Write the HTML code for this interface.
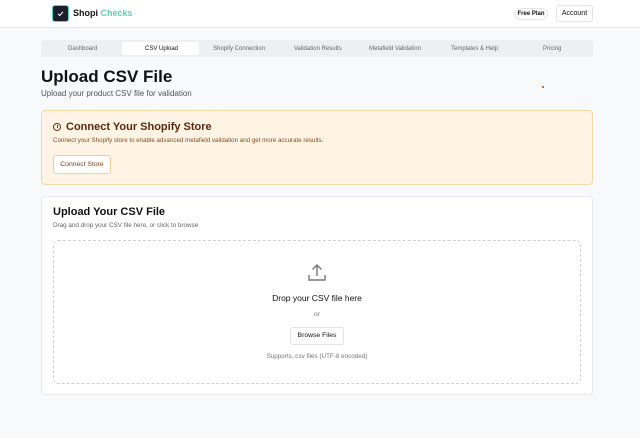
<!DOCTYPE html>
<html><head><style>
*{margin:0;padding:0;box-sizing:border-box}
body{width:640px;height:438px;background:#f8f9fa;font-family:"Liberation Sans",sans-serif;position:relative;overflow:hidden;color:#111}
.a{position:absolute}
</style></head><body>
<div class="a" style="left:0;top:0;width:640px;height:28px;background:#fff;border-bottom:1px solid #e8e8ec"></div>
<div class="a" style="left:52px;top:5px;width:17px;height:17px;background:#1d1d2b;border:1.5px solid #5ad6bf;border-radius:3px"></div>
<svg class="a" style="left:56px;top:9px" width="9" height="9" viewBox="0 0 9 9"><path d="M2 4.8L3.8 6.5L7 2.8" stroke="#fff" stroke-width="1.1" fill="none"/></svg>
<div class="a" style="left:73px;top:8px;font-size:9px;font-weight:bold">Shopi <span style="color:#5ccfb5">Checks</span></div>
<div class="a" style="left:514px;top:8px;width:34px;height:12px;border:1px solid #e6e6e6;border-radius:6px;font-size:6px;font-weight:bold;text-align:center;line-height:10px;background:#fff">Free Plan</div>
<div class="a" style="left:556px;top:5px;width:37px;height:17px;border:1px solid #e3e3e3;border-radius:3px;font-size:7px;text-align:center;line-height:15px;background:#fff">Account</div>
<div class="a" style="left:41px;top:40px;width:552px;height:17px;background:#eeeff1;border-radius:3px"></div>
<div class="a" style="left:122px;top:42px;width:77px;height:13px;background:#fff;border-radius:2px"></div>
<div class="a" style="top:45.5px;left:0;width:640px;font-size:6px;color:#666">
<span class="a" style="left:68px">Dashboard</span><span class="a" style="left:145px;color:#111">CSV Upload</span><span class="a" style="left:213px">Shopify Connection</span><span class="a" style="left:294px">Validation Results</span><span class="a" style="left:369px">Metafield Validation</span><span class="a" style="left:451px">Templates &amp; Help</span><span class="a" style="left:543px">Pricing</span></div>
<div class="a" style="left:41px;top:67px;font-size:17px;font-weight:bold">Upload CSV File</div>
<div class="a" style="left:41px;top:89px;font-size:8px;color:#555">Upload your product CSV file for validation</div>
<div class="a" style="left:542px;top:86px;width:2px;height:2px;background:#e06a1a"></div>
<div class="a" style="left:41px;top:110px;width:552px;height:75px;background:#fdf4e6;border:1px solid #f3d8a8;border-radius:4px"></div>
<div class="a" style="left:53px;top:123px;width:8px;height:8px;border:1px solid #6b3410;border-radius:50%"></div>
<div class="a" style="left:56.5px;top:125px;width:1px;height:2.5px;background:#6b3410"></div>
<div class="a" style="left:66px;top:121px;font-size:11px;font-weight:bold;color:#5a2a0c">Connect Your Shopify Store</div>
<div class="a" style="left:53px;top:136.5px;font-size:6.2px;color:#8a4a1a">Connect your Shopify store to enable advanced metafield validation and get more accurate results.</div>
<div class="a" style="left:53px;top:155px;width:58px;height:19px;background:#fff;border:1px solid #efcf99;border-radius:3px;font-size:6.8px;color:#7a4318;text-align:center;line-height:17px">Connect Store</div>
<div class="a" style="left:41px;top:196px;width:552px;height:199px;background:#fff;border:1px solid #e8e8ec;border-radius:4px"></div>
<div class="a" style="left:53px;top:206px;font-size:11px;font-weight:bold">Upload Your CSV File</div>
<div class="a" style="left:53px;top:222px;font-size:6.3px;color:#666">Drag and drop your CSV file here, or click to browse</div>
<div class="a" style="left:53px;top:240px;width:528px;height:144px;border:1.3px dashed #cfcfd4;border-radius:5px"></div>
<svg class="a" style="left:307px;top:263px" width="20" height="20" viewBox="0 0 20 20"><path d="M2 12v5h16v-5M10 13V2M5.5 6.5L10 2l4.5 4.5" stroke="#777" stroke-width="1.4" fill="none"/></svg>
<div class="a" style="left:0;width:634px;top:293px;text-align:center;font-size:8.5px">Drop your CSV file here</div>
<div class="a" style="left:0;width:634px;top:311px;text-align:center;font-size:6.8px;color:#777">or</div>
<div class="a" style="left:290px;top:327px;width:54px;height:18px;border:1px solid #e3e3e3;border-radius:3px;font-size:6.8px;text-align:center;line-height:16px">Browse Files</div>
<div class="a" style="left:0;width:634px;top:352.5px;text-align:center;font-size:6.3px;color:#777">Supports .csv files (UTF-8 encoded)</div>
</body></html>
